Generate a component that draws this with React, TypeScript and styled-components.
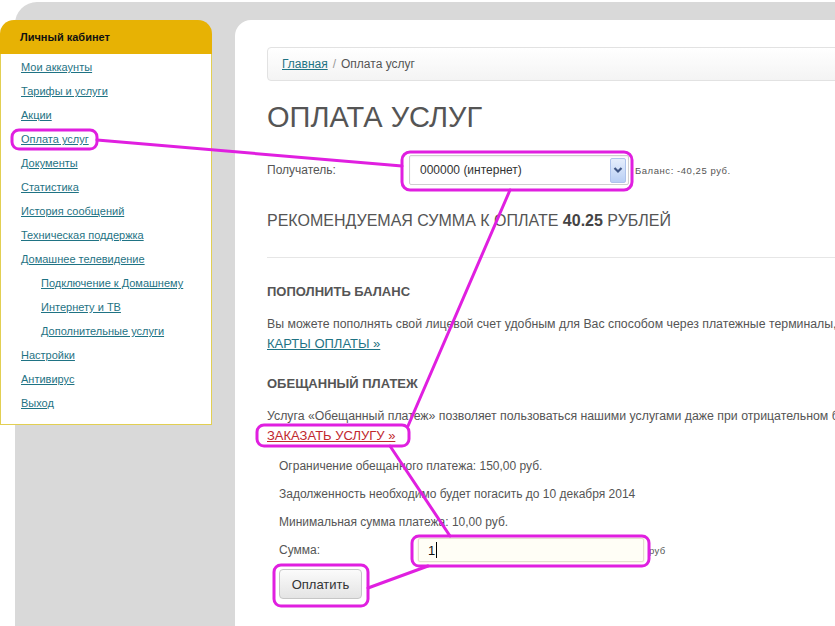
import styled, { createGlobalStyle } from "styled-components";

const GlobalStyle = createGlobalStyle`
  html, body {
    margin: 0;
    padding: 0;
    background: #fff;
  }
  body {
    font-family: "Liberation Sans", Arial, sans-serif;
  }
`;

type MenuItem = { label: string; sub?: boolean };

const menu: MenuItem[] = [
  { label: "Мои аккаунты" },
  { label: "Тарифы и услуги" },
  { label: "Акции" },
  { label: "Оплата услуг" },
  { label: "Документы" },
  { label: "Статистика" },
  { label: "История сообщений" },
  { label: "Техническая поддержка" },
  { label: "Домашнее телевидение" },
  { label: "Подключение к Домашнему", sub: true },
  { label: "Интернету и ТВ", sub: true },
  { label: "Дополнительные услуги", sub: true },
  { label: "Настройки" },
  { label: "Антивирус" },
  { label: "Выход" },
];

const terms = [
  "Ограничение обещанного платежа: 150,00 руб.",
  "Задолженность необходимо будет погасить до 10 декабря 2014",
  "Минимальная сумма платежа: 10,00 руб.",
];

const MARK = "#e01fe0";

const App: React.FC = () => {
  return (
    <Page>
      <GlobalStyle />
      <Frame>
        <Sidebar>
          <SideHead>Личный кабинет</SideHead>
          <SideBody>
            {menu.map((item) => (
              <MenuRow key={item.label} $sub={item.sub}>
                <MenuLink href="#">{item.label}</MenuLink>
              </MenuRow>
            ))}
          </SideBody>
        </Sidebar>

        <Main>
          <Crumbs>
            <CrumbLink href="#">Главная</CrumbLink>
            <CrumbSep>/</CrumbSep>
            <span>Оплата услуг</span>
          </Crumbs>

          <Title>ОПЛАТА УСЛУГ</Title>

          <FieldRow>
            <Label>Получатель:</Label>
            <Select>
              <SelectText>000000 (интернет)</SelectText>
              <SelectArrow>
                <svg width="10" height="8" viewBox="0 0 10 8">
                  <path d="M1.5 2 L5 5.5 L8.5 2" fill="none" stroke="#3f5584" strokeWidth="2.2" />
                </svg>
              </SelectArrow>
            </Select>
            <Balance>Баланс: -40,25 руб.</Balance>
          </FieldRow>

          <Recommended>
            РЕКОМЕНДУЕМАЯ СУММА К ОПЛАТЕ <b>40.25</b> РУБЛЕЙ
          </Recommended>

          <Divider />

          <SectionTitle>ПОПОЛНИТЬ БАЛАНС</SectionTitle>
          <Para>
            Вы можете пополнять свой лицевой счет удобным для Вас способом через платежные терминалы,
            банкоматы и карты оплаты.
            <br />
            <TextLink href="#">КАРТЫ ОПЛАТЫ »</TextLink>
          </Para>

          <SectionTitle $top={22}>ОБЕЩАННЫЙ ПЛАТЕЖ</SectionTitle>
          <Para>
            Услуга «Обещанный платеж» позволяет пользоваться нашими услугами даже при отрицательном балансе.
            <br />
            <TextLink href="#" $red>ЗАКАЗАТЬ УСЛУГУ »</TextLink>
          </Para>

          <PayForm>
            {terms.map((t) => (
              <Term key={t}>{t}</Term>
            ))}
            <FieldRow $top={2}>
              <Label $w={139}>Сумма:</Label>
              <AmountInput>
                1<Caret />
              </AmountInput>
              <Unit>руб</Unit>
            </FieldRow>
            <PayButton type="button">Оплатить</PayButton>
          </PayForm>
        </Main>
      </Frame>

      <Marks width="835" height="626" viewBox="0 0 835 626">
        <g fill="none" stroke={MARK} strokeWidth="3" strokeLinecap="round">
          <rect x="12" y="130" width="85" height="19" rx="7" />
          <rect x="402" y="152" width="230" height="38" rx="8" />
          <rect x="257" y="425" width="152" height="21" rx="7" />
          <rect x="412" y="536" width="237" height="30" rx="7" />
          <rect x="274" y="565" width="94" height="41" rx="7" />
          <path d="M97 140 L402 166" />
          <path d="M510 190 L408 426" />
          <path d="M390 446 L450 536" />
          <path d="M428 566 L368 588" />
        </g>
      </Marks>
    </Page>
  );
};

export default App;

const Page = styled.div`
  position: relative;
  width: 835px;
  height: 626px;
  overflow: hidden;
  background: #fff;
  padding-top: 2px;
  box-sizing: border-box;
`;

const Frame = styled.div`
  display: flex;
  align-items: flex-start;
  gap: 23px;
  margin-left: 15px;
  height: 624px;
  padding-top: 18px;
  box-sizing: border-box;
  background: #d9d9d9;
  border-top-left-radius: 22px;
`;

const Sidebar = styled.div`
  flex: none;
  width: 212px;
  margin-left: -15px;
  font-size: 11px;
`;

const SideHead = styled.div`
  height: 34px;
  line-height: 34px;
  padding-left: 20px;
  background: #e7b204;
  border-radius: 14px 14px 0 0;
  font-weight: bold;
  color: #111;
`;

const SideBody = styled.div`
  background: #fff;
  border: 1px solid #e2cf52;
  border-top: none;
  padding: 1px 0 9px 20px;
`;

const MenuRow = styled.div<{ $sub?: boolean }>`
  line-height: 24px;
  padding-left: ${(p) => (p.$sub ? 20 : 0)}px;
`;

const MenuLink = styled.a`
  color: #1f7384;
  text-decoration: underline;
`;

const Main = styled.div`
  flex: none;
  width: 640px;
  height: 606px;
  background: #fff;
  border-top-left-radius: 16px;
  padding: 27px 0 0 32px;
  box-sizing: border-box;
  color: #555;
  white-space: nowrap;
`;

const Crumbs = styled.div`
  display: flex;
  align-items: center;
  gap: 5px;
  height: 34px;
  padding: 0 14px;
  box-sizing: border-box;
  border: 1px solid #e2e2e2;
  border-radius: 4px;
  background: linear-gradient(#ffffff, #f4f4f4);
  font-size: 12px;
  color: #555;
`;

const CrumbLink = styled.a`
  color: #1f7384;
  text-decoration: underline;
`;

const CrumbSep = styled.span`
  color: #999;
`;

const Title = styled.h1`
  margin: 20px 0 0;
  font-size: 29px;
  line-height: 33px;
  font-weight: normal;
  color: #555;
`;

const FieldRow = styled.div<{ $top?: number }>`
  display: flex;
  align-items: center;
  margin-top: ${(p) => p.$top ?? 21}px;
  font-size: 12px;
`;

const Label = styled.div<{ $w?: number }>`
  width: ${(p) => p.$w ?? 142}px;
  flex: none;
  color: #555;
`;

const Select = styled.div`
  display: flex;
  align-items: center;
  justify-content: space-between;
  width: 220px;
  height: 30px;
  padding: 0 2px 0 10px;
  box-sizing: border-box;
  border: 1px solid #cfcfcf;
  border-radius: 2px;
  background: #fff;
  box-shadow: inset 0 1px 2px rgba(0, 0, 0, 0.06);
`;

const SelectText = styled.span`
  font-size: 12px;
  color: #333;
`;

const SelectArrow = styled.span`
  display: flex;
  align-items: center;
  justify-content: center;
  width: 16px;
  height: 25px;
  box-sizing: border-box;
  border: 1px solid #aec3ec;
  border-radius: 2px;
  background: linear-gradient(#e6eefc, #b9cff5);
`;

const Balance = styled.span`
  margin-left: 6px;
  font-size: 9.5px;
  letter-spacing: 0.55px;
  color: #555;
`;

const Recommended = styled.div`
  margin-top: 26px;
  font-size: 16px;
  line-height: 20px;
  color: #555;

  b {
    font-weight: bold;
    color: #444;
  }
`;

const Divider = styled.div`
  margin-top: 26px;
  height: 1px;
  background: #e6e6e6;
`;

const SectionTitle = styled.div<{ $top?: number }>`
  margin-top: ${(p) => p.$top ?? 26}px;
  font-size: 13px;
  line-height: 16px;
  font-weight: bold;
  color: #555;
`;

const Para = styled.div`
  margin-top: 15px;
  font-size: 12.3px;
  line-height: 19px;
  color: #555;
`;

const TextLink = styled.a<{ $red?: boolean }>`
  font-size: 13px;
  color: ${(p) => (p.$red ? "#c1272d" : "#1f7384")};
  text-decoration: underline;
`;

const PayForm = styled.div`
  margin-top: 6px;
  padding-left: 12px;
`;

const Term = styled.div`
  font-size: 12px;
  line-height: 28px;
  color: #555;
`;

const AmountInput = styled.div`
  display: flex;
  align-items: center;
  width: 226px;
  height: 24px;
  padding-left: 9px;
  box-sizing: border-box;
  border: 1px solid #e3e0cf;
  border-radius: 2px;
  background: #fffef6;
  box-shadow: 0 0 2px rgba(230, 210, 120, 0.6);
  font-size: 13px;
  color: #111;
`;

const Caret = styled.span`
  display: inline-block;
  width: 1px;
  height: 16px;
  margin-left: 1px;
  background: #000;
`;

const Unit = styled.span`
  margin-left: 5px;
  font-size: 9.5px;
  letter-spacing: 0.4px;
  color: #555;
`;

const PayButton = styled.button`
  display: block;
  margin-top: 7px;
  width: 83px;
  height: 30px;
  border: 1px solid #c6c6c6;
  border-radius: 4px;
  background: linear-gradient(#fbfbfb, #e4e4e4);
  font-family: "Liberation Sans", Arial, sans-serif;
  font-size: 13px;
  color: #333;
`;

const Marks = styled.svg`
  position: absolute;
  top: 0;
  left: 0;
  pointer-events: none;
`;
